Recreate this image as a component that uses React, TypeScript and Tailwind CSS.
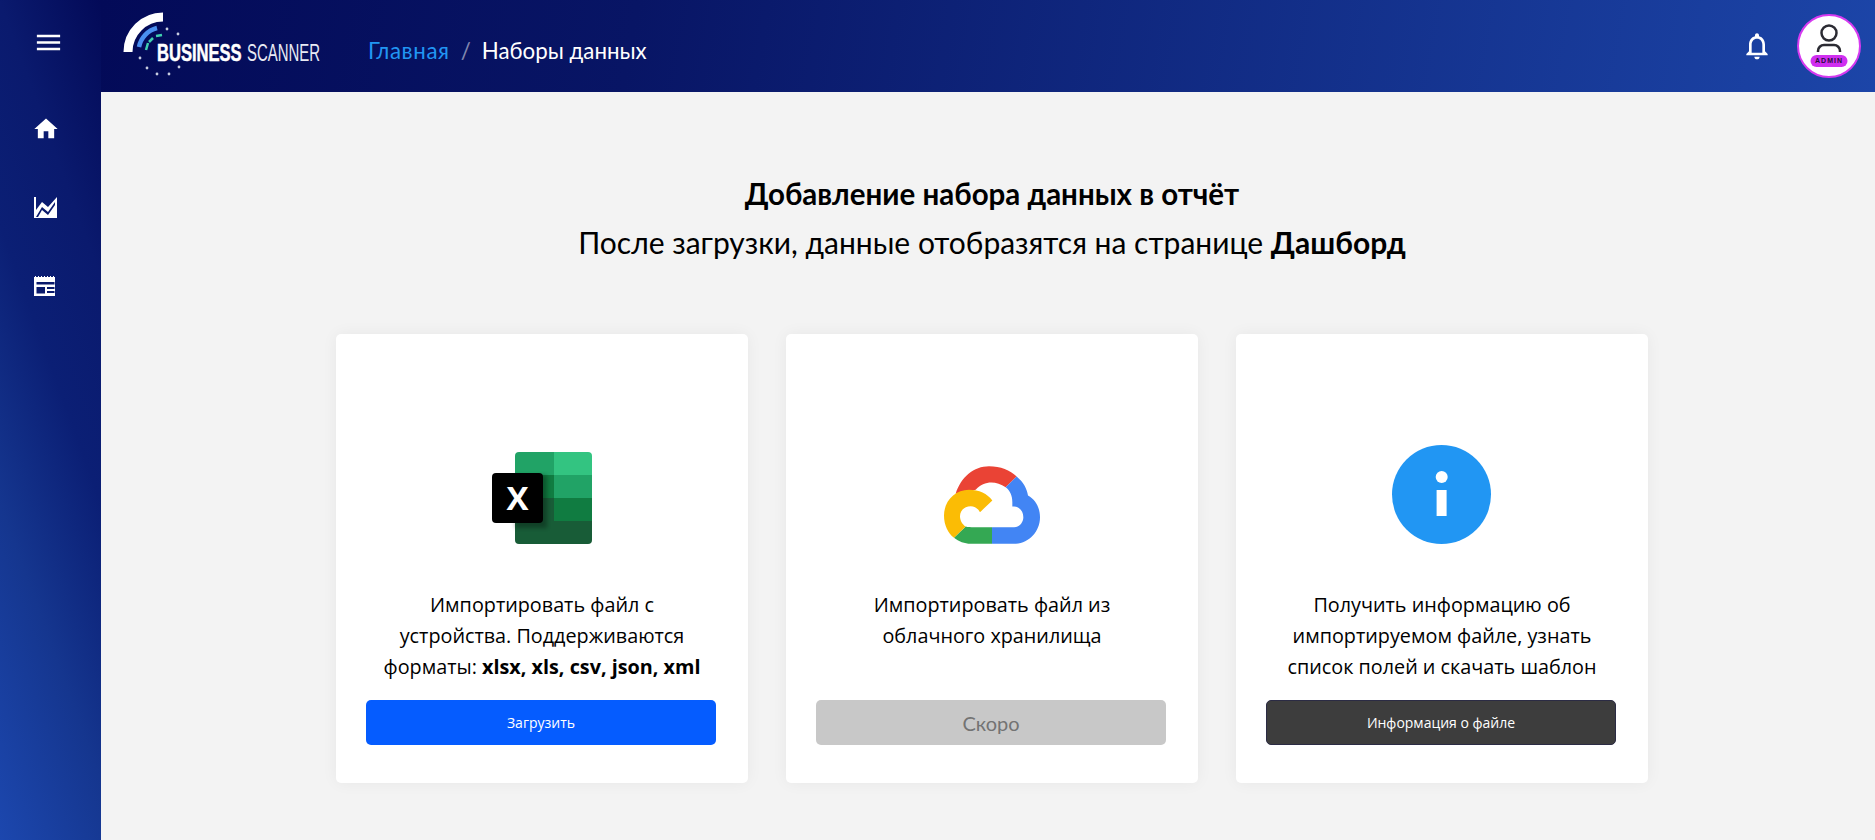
import { MdHome, MdMenu, MdNotificationsNone } from "react-icons/md"

const bodyFont = "[font-family:'Open_Sans','Noto_Sans',sans-serif]"

function Logo() {
  return (
    <svg width="200" height="80" viewBox="0 0 200 80" className="shrink-0">
      <path d="M7 46A35 35 0 0 1 42 11" fill="none" stroke="#fff" strokeWidth="9" />
      <path d="M18 41A24.500 24.500 0 0 1 36 22" fill="none" stroke="#4a90f0" strokeWidth="4.500" />
      <path d="M25 44 27 37M28 36 32 32M35 30 41 29" fill="none" stroke="#3fd1b0" strokeWidth="2.500" />
      {[[46, 23], [57, 28], [19, 52], [26, 62], [36, 68], [48, 68], [58, 61]].map(([cx, cy]) => (
        <circle key={cx + "-" + cy} cx={cx} cy={cy} r="1.400" fill="#c8cde0" />
      ))}
      <text transform="translate(36 54.500) scale(0.72 1)" fill="#fff" stroke="#fff" strokeWidth="0.500" fontFamily="Liberation Sans" fontWeight="700" fontSize="23">BUSINESS</text>
      <text transform="translate(126 54.500) scale(0.65 1)" fill="#e8eaf4" fontFamily="Liberation Sans" fontSize="23">SCANNER</text>
    </svg>
  )
}

function ChartIcon() {
  return (
    <svg width="23" height="21" viewBox="0 0 23 21">
      <path d="M0 0h2v13L8 5l6 5 9-10v21H0z" fill="#fff" />
      <path d="M2 20 8 10l6 5L21 5v3l-7 10-6-5-4 7z" fill="#0a1a6c" />
    </svg>
  )
}

function ReportIcon() {
  return (
    <svg width="23" height="20" viewBox="0 0 23 20">
      <path d="M0 1h1V0h1v1h2V0h1v1h2V0h1v1h2V0h1v1h2V0h1v1h2V0h1v1h2V0h1v1h1v19H0z" fill="#fff" />
      <path d="M2.500 6h18v2.500h-18zM2.500 11h8.500v6.500H2.500zM13 11h7.500v2H13zM13 15h7.500v2H13z" fill="#0a1a6c" />
    </svg>
  )
}

function ExcelIcon() {
  return (
    <svg width="100" height="92" viewBox="0 0 100 92" className="overflow-visible">
      <defs>
        <filter id="excelShade" x="-30%" y="-30%" width="170%" height="170%">
          <feGaussianBlur stdDeviation="2" />
        </filter>
      </defs>
      <path d="M23 4a4 4 0 0 1 4-4h35v23H23z" fill="#21a366" />
      <path d="M62 0h34a4 4 0 0 1 4 4v19H62z" fill="#33c481" />
      <rect x="23" y="23" width="39" height="23" fill="#107c41" />
      <rect x="62" y="23" width="38" height="23" fill="#21a366" />
      <rect x="23" y="46" width="39" height="23" fill="#185c37" />
      <rect x="62" y="46" width="38" height="23" fill="#107c41" />
      <path d="M23 69h77v19a4 4 0 0 1-4 4H27a4 4 0 0 1-4-4z" fill="#185c37" />
      <rect x="23" y="23" width="32" height="53" fill="#000" opacity="0.3" filter="url(#excelShade)" />
      <rect x="0" y="21" width="51" height="50" rx="4" fill="#000" />
      <text x="25.500" y="57.500" textAnchor="middle" fill="#fff" fontFamily="Open Sans" fontWeight="700" fontSize="33">X</text>
    </svg>
  )
}

function CloudIcon() {
  return (
    <svg width="96" height="78" viewBox="70 47 288 233">
      <path d="M288 78 255 110C225 90 190 90 165 118L105 130C120 80 160 47 205 47 240 47 268 58 288 78z" fill="#ea4335" />
      <path d="M288 78C308 95 318 113 322 135 345 148 358 172 358 200 358 245 322 280 280 280H214V230H280C296 230 308 216 308 200 308 182 296 168 280 168H275V155C275 135 268 120 255 110z" fill="#4285f4" />
      <path d="M214 230V280H150C132 280 114 273 100 262L135 228C142 230 150 230 160 230z" fill="#34a853" />
      <path d="M145 118C175 118 200 130 215 150L178 185C172 174 162 167 150 167 132 167 118 180 118 197 118 210 125 221 135 228L100 262C82 248 70 224 70 195 70 152 103 118 145 118z" fill="#fbbc05" />
    </svg>
  )
}

function InfoIcon() {
  return (
    <svg width="99" height="99" viewBox="0 0 99 99">
      <circle cx="49.500" cy="49.500" r="49.500" fill="#2196f3" />
      <circle cx="49.700" cy="32" r="6" fill="#fff" />
      <rect x="44.600" y="45" width="10" height="26" fill="#fff" />
    </svg>
  )
}

function SourceCard({
  icon,
  text,
  button,
  buttonClass,
}: {
  icon: React.ReactNode
  text: React.ReactNode
  button: string
  buttonClass: string
}) {
  return (
    <div className="w-[412px] h-[449px] bg-white rounded-[5px] shadow-[0_0_16px_rgba(0,0,0,0.05)] pl-[30px] pr-[32px] pb-[38px] flex flex-col">
      <div className="h-[255px] pb-[45px] pl-[1px] flex items-end justify-center">{icon}</div>
      <p className={`${bodyFont} pl-[13px] pr-[11px] text-center text-[19.8px] leading-[31px] text-black`}>{text}</p>
      <div className={`mt-auto h-[45px] rounded-[5px] flex items-center justify-center ${buttonClass}`}>{button}</div>
    </div>
  )
}

export default function App() {
  return (
    <div className="flex h-[840px] w-full overflow-hidden font-['Lato',sans-serif] bg-[#f3f3f3]">
      {/* Sidebar */}
      <aside className="w-[101px] shrink-0 pr-[10px] flex flex-col items-center bg-[linear-gradient(70deg,#1c47ae_0%,#15368f_30%,#0b1f75_55%,#0a1a6e_75%,#030a58_100%)]">
        <div className="mt-[27px] translate-x-[3px]"><MdMenu size={31} color="#fff" /></div>
        <div className="mt-[57px]"><MdHome size={28} color="#fff" /></div>
        <div className="mt-[54px]"><ChartIcon /></div>
        <div className="mt-[58px]"><ReportIcon /></div>
      </aside>

      <div className="flex-1 flex flex-col min-w-0">
        {/* Header */}
        <header className="h-[92px] shrink-0 flex items-center pl-[20px] pr-[14px] bg-[linear-gradient(100deg,#030a58_0%,#081565_30%,#1c45a8_100%)]">
          <Logo />
          <nav className="ml-[47px] mt-[10px] flex items-center text-[22.3px]">
            <span className="text-[#2196f3] tracking-[0.6px]">Главная</span>
            <span className="mx-[11px] text-white/50">/</span>
            <span className="text-white">Наборы данных</span>
          </nav>
          <div className="ml-auto flex items-center gap-[24px]">
            <MdNotificationsNone size={32} color="#fff" />
            <div className="relative w-[64px] h-[64px] rounded-full bg-white border-2 border-[#d63af0] flex justify-center">
              <svg width="26" height="30" viewBox="0 0 26 30" fill="none" stroke="#2b2b33" strokeWidth="2.500" className="mt-[8px]">
                <circle cx="13" cy="9" r="7.500" />
                <path d="M2 28v-1a6 6 0 0 1 6-6h10a6 6 0 0 1 6 6v1" />
              </svg>
              <span className="absolute bottom-[9px] left-1/2 -translate-x-1/2 w-[37px] h-[12px] rounded-full bg-[#d02ff0] text-[7px] leading-[12px] font-bold tracking-[1px] text-center text-[#2a1040] font-['Liberation_Sans',sans-serif]">ADMIN</span>
            </div>
          </div>
        </header>

        {/* Content */}
        <main className="flex-1 pl-[8px] flex flex-col items-center text-black">
          <h1 className="mt-[82px] text-[29.5px] leading-[40px] font-bold">Добавление набора данных в отчёт</h1>
          <p className="mt-[8px] text-[30px] leading-[40px]">
            После загрузки, данные отобразятся на странице <b>Дашборд</b>
          </p>
          <div className="mt-[72px] flex gap-[38px]">
            <SourceCard
              icon={<ExcelIcon />}
              text={<>Импортировать файл с устройства. Поддерживаются форматы: <b>xlsx, xls, csv, json, xml</b></>}
              button="Загрузить"
              buttonClass={`${bodyFont} bg-[#055cff] text-white text-[14px]`}
            />
            <SourceCard
              icon={<CloudIcon />}
              text="Импортировать файл из облачного хранилища"
              button="Скоро"
              buttonClass="bg-[#c8c8c8] text-[#737373] text-[20px]"
            />
            <SourceCard
              icon={<InfoIcon />}
              text="Получить информацию об импортируемом файле, узнать список полей и скачать шаблон"
              button="Информация о файле"
              buttonClass={`${bodyFont} bg-[#3d3d3d] text-white text-[14px] font-medium border border-[#2b2b44]`}
            />
          </div>
        </main>
      </div>
    </div>
  )
}
